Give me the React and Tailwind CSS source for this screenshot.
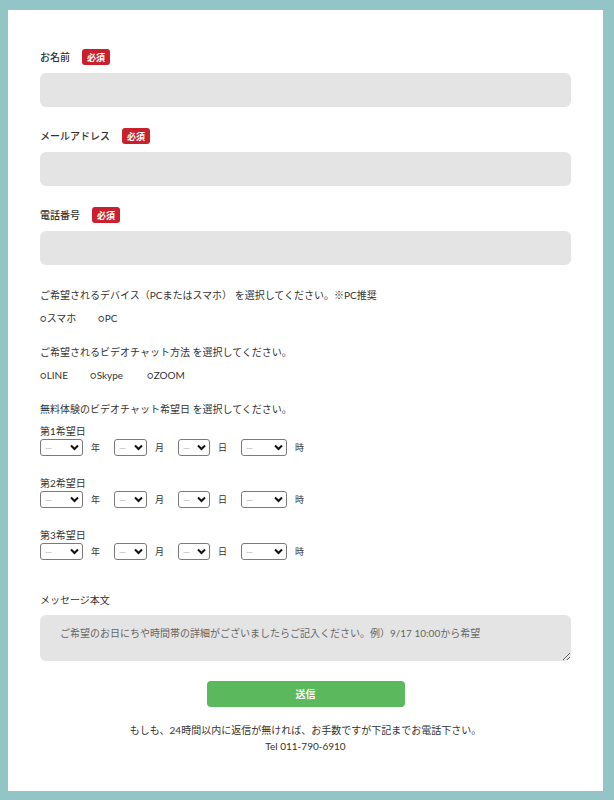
import React from "react";

const font = { fontFamily: 'Lato, "Noto Sans CJK JP", sans-serif' };

function Badge() {
  return (
    <span className="inline-flex h-[16px] w-[28px] items-center justify-center rounded-[3px] bg-[#c8202f] text-[9px] font-bold leading-none text-white">
      必須
    </span>
  );
}

function Field({ label }) {
  return (
    <div className="mb-[21px]">
      <div className="flex h-[16px] items-center gap-[12px]">
        <span className="text-[10px] font-medium text-[#333]">{label}</span>
        <Badge />
      </div>
      <input className="mt-[8px] block h-[34px] w-full rounded-[6px] bg-[#e4e4e4] outline-none" />
    </div>
  );
}

function Sel({ w }) {
  return (
    <div className="relative flex h-[17px] shrink-0" style={{ width: w }}>
      <select className="block h-[17px] w-full appearance-none rounded-[3px] border border-[#7a7a7a] bg-white py-0 pl-[4px] text-[9px] leading-[15px] text-[#bbb] outline-none">
        <option>—</option>
      </select>
      <svg
        className="pointer-events-none absolute right-[4px] top-[5px]"
        width="9"
        height="7"
        viewBox="0 0 9 7"
      >
        <path d="M1 1.5 L4.5 5 L8 1.5" fill="none" stroke="#111" strokeWidth="2" />
      </svg>
    </div>
  );
}

function DateRow({ title }) {
  const units = [
    [43, "年"],
    [33, "月"],
    [32, "日"],
    [46, "時"],
  ];
  return (
    <div>
      <div className="h-[15px] text-[10px] leading-[15px] text-[#333]">{title}</div>
      <div className="flex h-[17px] items-center">
        {units.map(([w, c]) => (
          <React.Fragment key={c}>
            <Sel w={w} />
            <span className="ml-[8px] mr-[13px] w-[10px] shrink-0 text-[9px] leading-[17px] text-[#333]">{c}</span>
          </React.Fragment>
        ))}
      </div>
    </div>
  );
}

export default function App() {
  return (
    <div className="min-h-[800px] bg-[#93c4c6] pb-[9px] pl-[8px] pr-[11px] pt-[10px]" style={font}>
      <div className="h-[781px] bg-white px-[32px] pt-[39px]">
        <Field label="お名前" />
        <Field label="メールアドレス" />
        <Field label="電話番号" />

        <div className="mt-[23px] text-[10px] leading-[15px] text-[#333]">
          ご希望されるデバイス（PCまたはスマホ） を選択してください。※PC推奨
        </div>
        <div className="mt-[8px] flex text-[10px] leading-[15px] text-[#333]">
          <span className="w-[58px]">○スマホ</span>
          <span>○PC</span>
        </div>

        <div className="mt-[19px] text-[10px] leading-[15px] text-[#333]">
          ご希望されるビデオチャット方法 を選択してください。
        </div>
        <div className="mt-[8px] flex text-[10px] leading-[15px] text-[#333]">
          <span className="w-[50px]">○LINE</span>
          <span className="w-[57px]">○Skype</span>
          <span>○ZOOM</span>
        </div>

        <div className="mt-[19px] text-[10px] leading-[15px] text-[#333]">
          無料体験のビデオチャット希望日 を選択してください。
        </div>
        <div className="mt-[7px]">
          <DateRow title="第1希望日" />
        </div>
        <div className="mt-[20px]">
          <DateRow title="第2希望日" />
        </div>
        <div className="mt-[20px]">
          <DateRow title="第3希望日" />
        </div>

        <div className="mt-[33px] text-[10px] leading-[15px] text-[#333]">メッセージ本文</div>
        <textarea
          className="mt-[7px] block h-[46px] w-full rounded-[6px] bg-[#e4e4e4] px-[20px] pt-[11px] text-[10px] leading-[15px] text-[#333] outline-none placeholder:text-[#666]"
          placeholder="ご希望のお日にちや時間帯の詳細がございましたらご記入ください。例）9/17 10:00から希望"
        />

        <div className="mt-[20px] flex justify-center">
          <button className="h-[26px] w-[198px] rounded-[4px] bg-[#5cb85c] text-[10px] font-bold text-white">
            送信
          </button>
        </div>

        <div className="mt-[15px] text-center text-[10px] leading-[16px] text-[#333]">
          <div>もしも、24時間以内に返信が無ければ、お手数ですが下記までお電話下さい。</div>
          <div>Tel 011-790-6910</div>
        </div>
      </div>
    </div>
  );
}
